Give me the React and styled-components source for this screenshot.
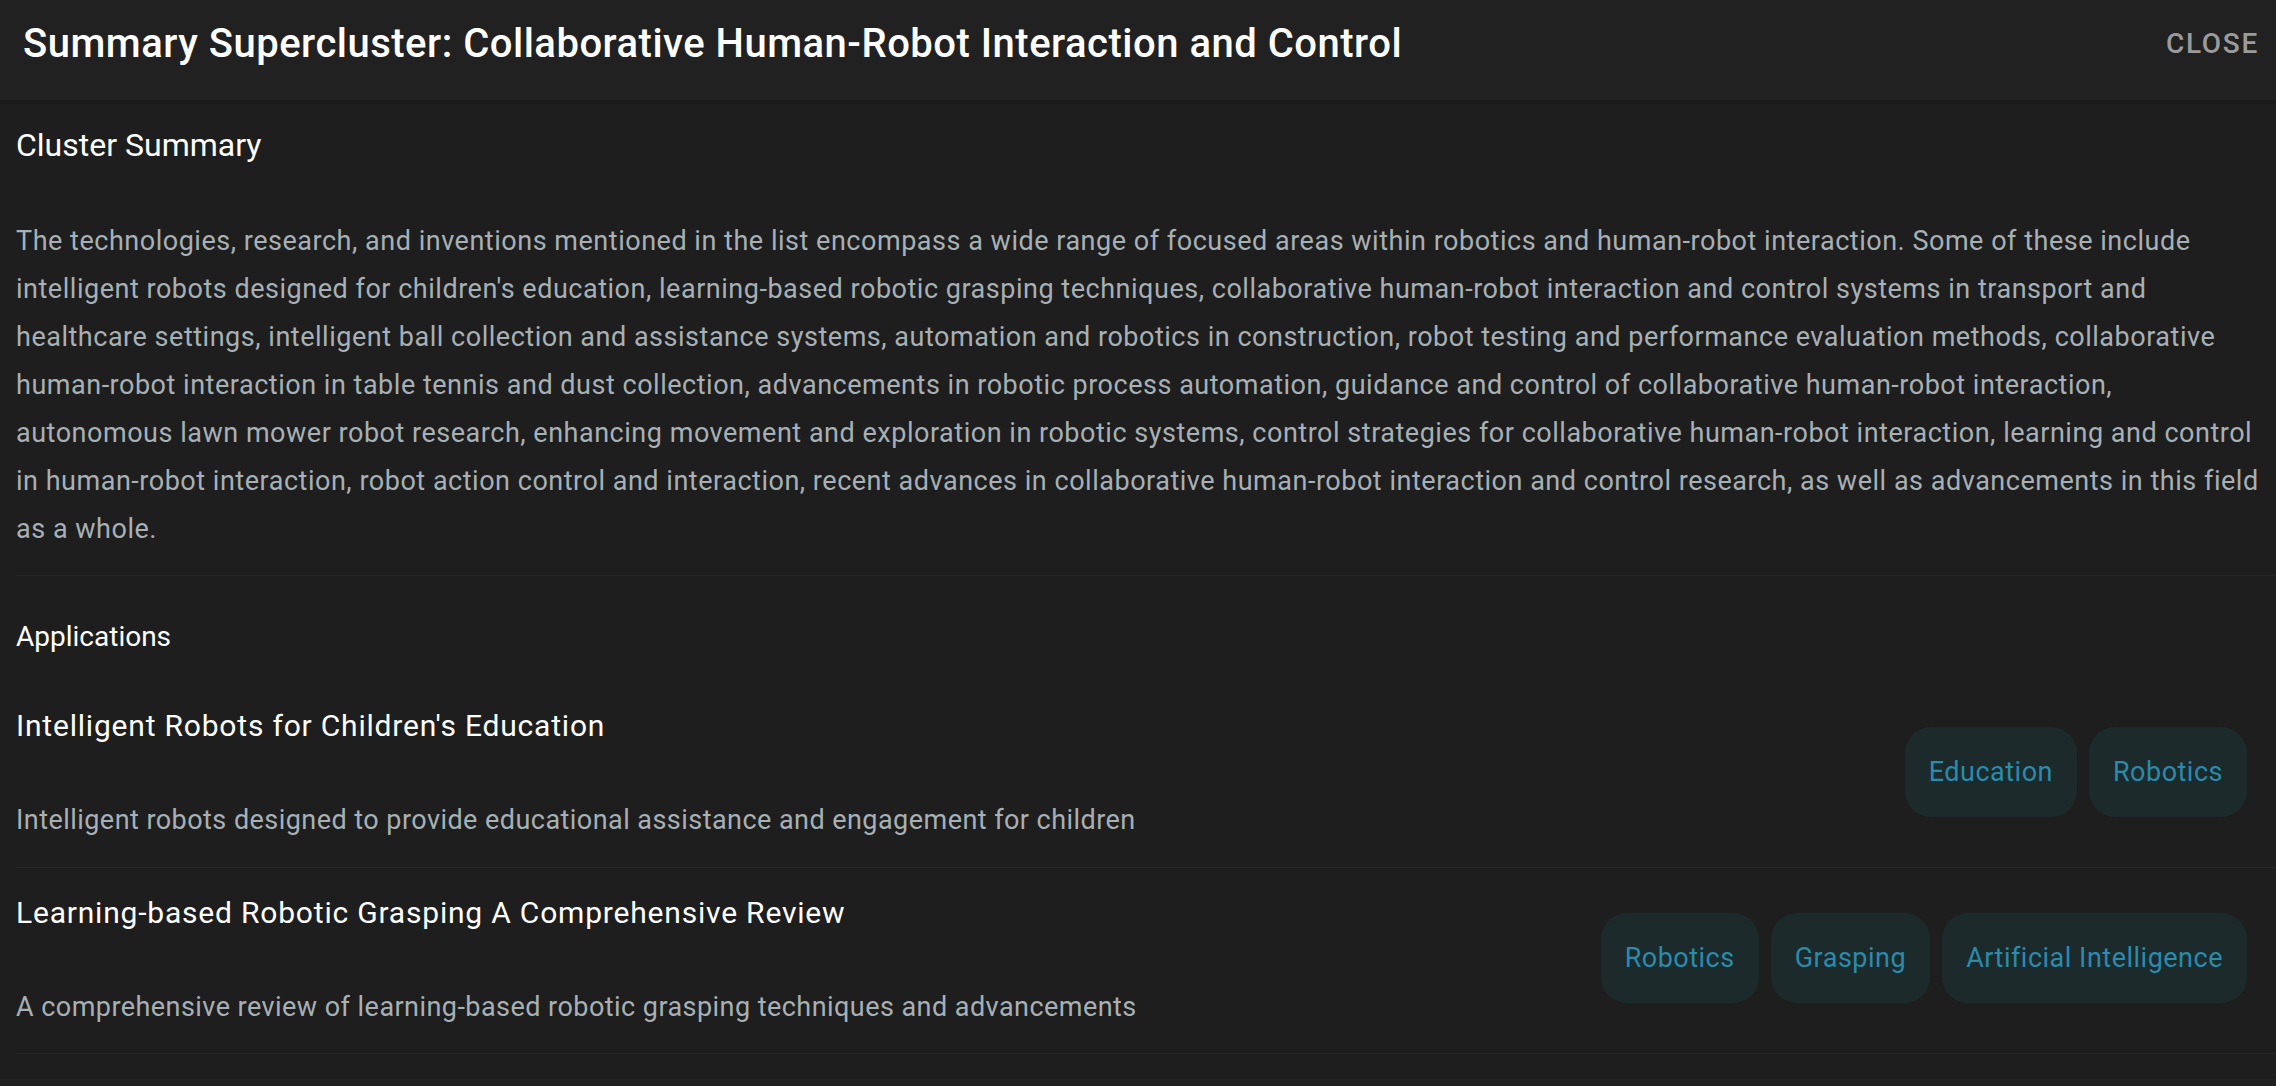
import React from "react";
import styled, { createGlobalStyle } from "styled-components";

const Global = createGlobalStyle`
  html, body { margin: 0; padding: 0; background: #1e1e1e; }
  body { font-family: Roboto, "Noto Sans", "Liberation Sans", sans-serif; -webkit-font-smoothing: antialiased; }
  * { box-sizing: border-box; }
`;

const Page = styled.div`
  height: 100vh;
  overflow: hidden;
  display: flex;
  flex-direction: column;
  background: #1e1e1e;
`;

const Header = styled.header`
  flex: none;
  height: 104px;
  display: flex;
  align-items: flex-start;
  justify-content: space-between;
  padding: 16px 17px 0 23px;
  background: #212121;
  border-bottom: 4px solid #1a1a1a;
  position: relative;
  z-index: 1;
`;

const Title = styled.h1`
  margin: 0;
  font-size: 40px;
  line-height: 56px;
  font-weight: 500;
  color: #ffffff;
  letter-spacing: 0.5px;
`;

const CloseButton = styled.button`
  border: 0;
  background: none;
  padding: 0;
  font-family: inherit;
  font-size: 28px;
  line-height: 56px;
  font-weight: 500;
  letter-spacing: 1.7px;
  text-transform: uppercase;
  color: #9b9b9b;
  cursor: pointer;
`;

const Content = styled.main`
  flex: 1;
  padding-left: 16px;
`;

const Section = styled.section`
  padding: ${(p) => p.$pt || 0}px 0 ${(p) => p.$pb || 0}px;
  border-bottom: ${(p) => (p.$divider ? "1px solid #272727" : "none")};
`;

const SectionHeading = styled.h2`
  margin: 0;
  font-size: ${(p) => p.$size}px;
  line-height: 1.5;
  font-weight: 400;
  color: #ffffff;
`;

const Paragraph = styled.p`
  margin: 48px 16px 0 0;
  font-size: 27px;
  line-height: 48px;
  letter-spacing: 0.52px;
  color: #a7b0b5;
`;

const List = styled.ul`
  list-style: none;
  margin: 23px 0 0;
  padding: 0;
`;

const Row = styled.li`
  display: flex;
  align-items: center;
  justify-content: space-between;
  gap: 24px;
  padding: 22px 29px 26px 0;
  border-bottom: 1px solid #272727;
`;

const RowText = styled.div`
  display: flex;
  flex-direction: column;
  gap: 52px;
`;

const RowTitle = styled.div`
  font-size: 30px;
  line-height: 45px;
  letter-spacing: 0.8px;
  color: #ffffff;
`;

const RowDesc = styled.div`
  font-size: 27px;
  line-height: 40.5px;
  letter-spacing: 0.45px;
  color: #a7b0b5;
`;

const Chips = styled.div`
  display: flex;
  gap: 12px;
  flex: none;
`;

const Chip = styled.span`
  display: inline-flex;
  align-items: center;
  height: 90px;
  padding: 0 24px;
  border-radius: 26px;
  background: #1c2a2c;
  color: #2a8bab;
  font-size: 27px;
  letter-spacing: 0.5px;
`;

const Footer = styled.div`
  margin-top: 23px;
  height: 40px;
  border-top: 1px solid #191919;
  background: #202020;
`;

const apps = [
  {
    title: "Intelligent Robots for Children's Education",
    desc: "Intelligent robots designed to provide educational assistance and engagement for children",
    tags: ["Education", "Robotics"],
  },
  {
    title: "Learning-based Robotic Grasping A Comprehensive Review",
    desc: "A comprehensive review of learning-based robotic grasping techniques and advancements",
    tags: ["Robotics", "Grasping", "Artificial Intelligence"],
  },
];

const summary =
  "The technologies, research, and inventions mentioned in the list encompass a wide range of focused areas within robotics and human-robot interaction. Some of these include intelligent robots designed for children's education, learning-based robotic grasping techniques, collaborative human-robot interaction and control systems in transport and healthcare settings, intelligent ball collection and assistance systems, automation and robotics in construction, robot testing and performance evaluation methods, collaborative human-robot interaction in table tennis and dust collection, advancements in robotic process automation, guidance and control of collaborative human-robot interaction, autonomous lawn mower robot research, enhancing movement and exploration in robotic systems, control strategies for collaborative human-robot interaction, learning and control in human-robot interaction, robot action control and interaction, recent advances in collaborative human-robot interaction and control research, as well as advancements in this field as a whole.";

export default function App() {
  return (
    <Page>
      <Global />
      <Header>
        <Title>Summary Supercluster: Collaborative Human-Robot Interaction and Control</Title>
        <CloseButton>Close</CloseButton>
      </Header>
      <Content>
        <Section $pt={17} $pb={22} $divider>
          <SectionHeading $size={32}>Cluster Summary</SectionHeading>
          <Paragraph>{summary}</Paragraph>
        </Section>
        <Section $pt={40}>
          <SectionHeading $size={28}>Applications</SectionHeading>
          <List>
            {apps.map((a) => (
              <Row key={a.title}>
                <RowText>
                  <RowTitle>{a.title}</RowTitle>
                  <RowDesc>{a.desc}</RowDesc>
                </RowText>
                <Chips>
                  {a.tags.map((t) => (
                    <Chip key={t}>{t}</Chip>
                  ))}
                </Chips>
              </Row>
            ))}
          </List>
        </Section>
      </Content>
      <Footer />
    </Page>
  );
}
